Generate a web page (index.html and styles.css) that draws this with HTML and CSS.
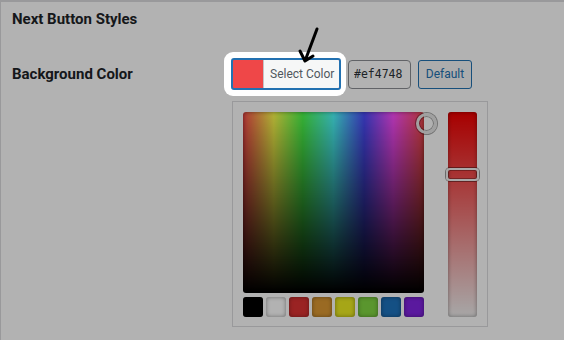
FILE: index.html
```html
<!DOCTYPE html>
<html lang="en">
<head>
    <meta charset="UTF-8">
    <meta name="viewport" content="width=device-width, initial-scale=1.0">
    <title>Next Button Styles</title>
    <link rel="stylesheet" href="styles.css">
</head>
<body>
    <div class="card">
        <h2 class="card-title">Next Button Styles</h2>
        <div class="field-row">
            <div class="field-label">Background Color</div>
            <div class="field-control">
                <div class="picker-bar">
                    <div class="spotlight">
                        <button class="color-result" type="button">
                            <span class="color-swatch"></span>
                            <span class="color-result-text">Select Color</span>
                        </button>
                    </div>
                    <input class="hex-input" type="text" value="#ef4748">
                    <button class="default-btn" type="button">Default</button>
                </div>
                <div class="iris">
                    <div class="iris-square"><span class="square-handle"></span></div>
                    <div class="iris-strip"><span class="strip-handle"></span></div>
                    <div class="iris-palette">
                        <span class="swatch swatch-black"></span>
                        <span class="swatch swatch-white"></span>
                        <span class="swatch swatch-red"></span>
                        <span class="swatch swatch-orange"></span>
                        <span class="swatch swatch-yellow"></span>
                        <span class="swatch swatch-green"></span>
                        <span class="swatch swatch-blue"></span>
                        <span class="swatch swatch-purple"></span>
                    </div>
                </div>
            </div>
        </div>
    </div>

    <!-- tutorial dimming + pointer -->
    <div class="dim"></div>
    <svg class="arrow" width="26" height="40" viewBox="0 0 26 40">
        <path d="M21 3 L9 35 M4 25 L9 35 L17 30" fill="none" stroke="#000" stroke-width="3" stroke-linecap="round" stroke-linejoin="round"/>
    </svg>
</body>
</html>
```

FILE: styles.css
```css
body {
    margin: 0;
    padding: 0;
    background: #fff;
    font-family: Roboto, "Liberation Sans", Arial, sans-serif;
    color: #1d2327;
    overflow: hidden;
}

.card {
    height: 340px;
    border-top: 2px solid #dcdcde;
    border-left: 1px solid #dcdcde;
    padding-left: 11px;
    box-sizing: border-box;
}

.card-title {
    margin: 0;
    padding-top: 7px;
    font-size: 15px;
    line-height: 20px;
    font-weight: 700;
}

.field-row {
    display: flex;
    margin-top: 29px;
}

.field-label {
    width: 219px;
    padding-top: 6px;
    font-size: 15px;
    line-height: 20px;
    font-weight: 700;
}

.picker-bar {
    display: flex;
    align-items: center;
}

.spotlight {
    position: relative;
    z-index: 11;
    background: #fff;
    border-radius: 9px;
    padding: 6px 5px 6px 7px;
    margin: -6px -5px -6px -7px;
    display: flex;
}

.color-result {
    display: flex;
    width: 110px;
    height: 32px;
    padding: 0;
    border: 2px solid #2271b1;
    border-radius: 3px;
    background: #ef4748;
    overflow: hidden;
    cursor: pointer;
    font-family: inherit;
}

.color-swatch {
    width: 30px;
    flex-shrink: 0;
}

.color-result-text {
    flex: 1;
    display: flex;
    align-items: center;
    padding-left: 6px;
    background: #f6f7f7;
    border-left: 1px solid #c3c4c7;
    color: #50575e;
    font-size: 12px;
}

.hex-input {
    width: 63px;
    height: 29px;
    margin-left: 7px;
    padding: 0 0 0 5px;
    box-sizing: border-box;
    border: 1px solid #8c8f94;
    border-radius: 4px;
    background: #fff;
    color: #2c3338;
    font-family: "DejaVu Sans Mono", "Liberation Mono", monospace;
    font-size: 11.5px;
}

.default-btn {
    width: 54px;
    height: 29px;
    margin-left: 7px;
    padding: 0;
    border: 1px solid #2271b1;
    border-radius: 3px;
    background: #f6f7f7;
    color: #2271b1;
    font-family: inherit;
    font-size: 12px;
    cursor: pointer;
}

.iris {
    display: grid;
    grid-template-columns: 181px 29px;
    grid-template-rows: 181px 20px;
    column-gap: 24px;
    row-gap: 4px;
    width: 234px;
    margin: 11px 0 0 1px;
    padding: 10px 10px 9px 10px;
    border: 1px solid #dcdcde;
    background: #fff;
}

.iris-square {
    position: relative;
    border-radius: 3px;
    background:
        linear-gradient(to bottom, rgba(0, 0, 0, 0), #000),
        linear-gradient(to right, #ff4d4d, #ffff4d 17%, #4dff4d 33%, #4dffff 50%, #4d4dff 67%, #ff4dff 83%, #ff4d4d);
    box-shadow: inset 0 0 4px rgba(0, 0, 0, 0.45);
}

.square-handle {
    position: absolute;
    left: 173px;
    top: 1px;
    width: 15px;
    height: 15px;
    border: 3px solid #e6e6e6;
    border-radius: 50%;
    box-shadow: 0 0 0 1px rgba(0, 0, 0, 0.35), inset 0 0 0 1px rgba(0, 0, 0, 0.35);
}

.iris-strip {
    position: relative;
    grid-row: 1 / 3;
    grid-column: 2;
    border-radius: 3px;
    background: linear-gradient(to bottom, #f00000, #f0f0f0);
    box-shadow: inset 0 0 4px rgba(0, 0, 0, 0.4);
}

.strip-handle {
    position: absolute;
    left: -2px;
    top: 56px;
    width: 29px;
    height: 9px;
    border: 2px solid #f2f2f2;
    border-radius: 4px;
    box-shadow: 0 0 0 1px rgba(0, 0, 0, 0.4), inset 0 0 0 1px rgba(0, 0, 0, 0.3);
}

.iris-palette {
    display: flex;
    gap: 3px;
}

.swatch {
    width: 20px;
    height: 20px;
    border-radius: 3px;
    box-shadow: inset 0 0 4px rgba(0, 0, 0, 0.4);
}

.swatch-black { background: #000; }
.swatch-white { background: #fff; }
.swatch-red { background: #dd3333; }
.swatch-orange { background: #dd9933; }
.swatch-yellow { background: #eeee22; }
.swatch-green { background: #81d742; }
.swatch-blue { background: #1e73be; }
.swatch-purple { background: #8224e3; }

.dim {
    position: fixed;
    inset: 0;
    z-index: 10;
    background: rgba(0, 0, 0, 0.3);
}

.arrow {
    position: absolute;
    left: 296px;
    top: 26px;
    z-index: 12;
}
```
